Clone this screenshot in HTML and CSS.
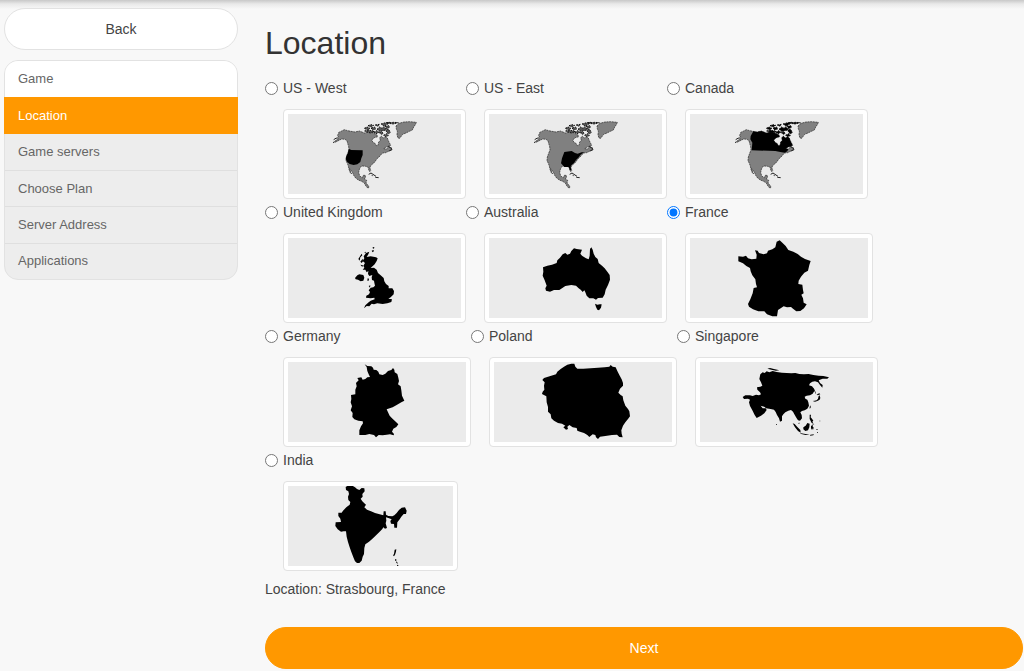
FILE: index.html
```
<!DOCTYPE html>
<html lang="en">
  <head>
    <meta charset="utf-8">
    <meta name="viewport" content="width=device-width, initial-scale=1">
    <title>Location</title>
    <link rel="stylesheet" href="styles.css">
  </head>
  <body>
    <!-- shared outline for the three North America maps -->
    <svg class="shapes" aria-hidden="true">
      <symbol id="north-america" overflow="visible">
        <path class="map__land" d="M24 98L33 91 40 87 34 85 40 80 37 76 41 71 40 68 50 63 58 59 68 62 78 64 90 66 103 63 118 69 130 66 142 68 155 74 158 80 148 83 140 90 144 97 151 101 154 107 159 106 161 96 166 91 164 84 169 78 175 84 182 80 187 84 190 92 193 98 197 106 191 109 182 112 176 116 184 117 190 112 199 113 200 119 190 124 182 128 173 129 168 134 162 141 155 147 150 155 143 162 136 168 135 175 137 182 134 185 131 179 129 171 122 169 112 168 105 172 103 179 101 187 104 198 112 203 115 196 121 196 121 203 118 207 125 211 123 219 129 226 132 231 129 235 122 227 118 219 110 214 100 210 92 204 86 196 83 188 77 180 74 176 76 184 80 192 76 188 72 178 70 168 67 160 63 152 64 141 68 130 72 120 71 110 68 100 66 92 60 88 50 87 40 92 32 96z"/>
        <path class="map__land" d="M213 48L222 40 237 36 254 35 274 37 271 44 266 51 262 60 253 64 245 68 233 73 224 85 219 84 216 75 217 64 214 56z"/>
        <path class="map__islands" d="M118 55l8-4 9 4-7 5zM129 47l9-3 8 2-7 5zM139 54l10-3 3 6-10 4zM151 45l12-2-4 6zM156 58l8-7 7 4 6-5 7 9 6-2 6 10-5 5-5-4-4-8-9 2-7 3zM168 42l14-4 12-1-7 6-9 5zM180 49l11-2 3 4-9 5zM186 39l20-2 14 1-16 4zM176 76l9-5 5 6-9 3zM119 63l12-3 16 5-11 4zM146 67l9-5 7 5-9 4zM163 68l7-2 5 4-6 3z"/>
        <path class="map__coast" d="M131 193l7-4 9 6 6 4M151 202l10 1M140 196l3 1M189 108l8 5 4 6-9 4M34 84l-8 5"/>
      </symbol>
    </svg>

    <div class="page">
      <nav class="sidebar">
        <button class="button button_back" type="button">Back</button>
        <ul class="steps">
          <li class="steps__item steps__item_done"><a class="steps__link" href="#game">Game</a></li>
          <li class="steps__item steps__item_active"><a class="steps__link" href="#location">Location</a></li>
          <li class="steps__item"><a class="steps__link" href="#servers">Game servers</a></li>
          <li class="steps__item"><a class="steps__link" href="#plan">Choose Plan</a></li>
          <li class="steps__item"><a class="steps__link" href="#address">Server Address</a></li>
          <li class="steps__item"><a class="steps__link" href="#applications">Applications</a></li>
        </ul>
      </nav>

      <main class="content">
        <h1 class="content__header">Location</h1>
        <div class="locations">
          <div class="location">
            <input class="location__radio" type="radio" name="location" id="us-west">
            <label class="location__label" for="us-west">US - West
              <svg class="map" viewBox="-111 12 519 240" aria-hidden="true">
                <use href="#north-america"/>
                <path d="M70 120L72 117 79 120 113 121 113 135 109 145 106 156 97 163 86 165 74 162 66 155 62 146 65 136 69 129z"/>
              </svg>
            </label>
          </div>
          <div class="location">
            <input class="location__radio" type="radio" name="location" id="us-east">
            <label class="location__label" for="us-east">US - East
              <svg class="map" viewBox="-111 12 519 240" aria-hidden="true">
                <use href="#north-america"/>
                <path d="M115 126L137 123 147 129 155 131 167 127 175 127 165 133 157 143 150 150 144 159 136 166 134 170 136 181 132 181 128 171 115 171 105 160 108 145z"/>
              </svg>
            </label>
          </div>
          <div class="location">
            <input class="location__radio" type="radio" name="location" id="canada">
            <label class="location__label" for="canada">Canada
              <svg class="map map_canada" viewBox="-111 12 519 240" aria-hidden="true">
                <use href="#north-america"/>
                <path d="M79 64L90 66 103 63 118 69 130 66 142 68 155 74 158 80 148 83 140 90 144 97 151 101 154 107 159 106 161 96 166 91 164 84 169 78 175 84 182 80 187 84 190 92 193 98 197 106 191 109 182 112 176 116 184 117 181 124 173 128 160 126 145 123 74 121 76 98 70 88 71 78z"/>
              </svg>
            </label>
          </div>
          <div class="location">
            <input class="location__radio" type="radio" name="location" id="uk">
            <label class="location__label" for="uk">United Kingdom
              <svg class="map" viewBox="-156 9 519 240" aria-hidden="true">
                <path d="M78 54L88 50 85 58 80 66 92 64 108 67 113 70 110 78 104 88 96 95 92 99 102 98 110 104 114 114 122 121 131 129 133 139 138 147 146 153 146 160 157 160 162 168 161 178 152 187 145 191 156 193 154 201 142 205 128 207 112 205 102 208 95 206 88 214 80 213 72 220 76 211 86 202 92 197 104 193 103 188 92 190 78 188 79 182 87 178 90 171 86 166 92 158 100 157 105 152 103 143 102 137 96 135 95 127 97 120 88 123 84 117 85 108 80 112 76 104 68 104 73 98 70 92 75 84 68 78 73 70 71 64z"/>
                <path d="M45 129L52 121 58 118 70 120 73 128 70 137 62 139 54 134 47 133zM55 72l6-10 4-6 2 5-6 6-2 10zM61 80l7-9 1 8-4 5zM61 89l8 2-2 5zM95 47l5-2 2 3-4 4zM98 37l5-1-1 5-4-1zM83 130l4 1-1 6-4 0zM86 153l5-2-1 7zM73 52l5-2-2 5z"/>
              </svg>
            </label>
          </div>
          <div class="location">
            <input class="location__radio" type="radio" name="location" id="australia">
            <label class="location__label" for="australia">Australia
              <svg class="map" viewBox="-123 9 519 240" aria-hidden="true">
                <path d="M39 97L52 92 66 89 80 84 82 76 90 68 98 58 106 54 112 59 120 56 124 48 132 40 140 42 156 44 151 56 156 62 168 70 176 73 179 62 180 42 184 37 188 44 191 56 196 66 203 72 206 84 216 92 224 100 232 110 239 120 240 134 234 150 227 164 224 178 218 188 204 189 198 194 190 190 178 190 170 182 166 172 163 166 158 171 152 164 146 160 138 152 124 150 106 153 96 160 88 165 72 165 60 170 48 167 46 160 50 152 44 136 38 122 40 110z"/>
                <path d="M195 206L202 209 210 208 215 208 213 218 207 226 202 224 198 216z"/>
              </svg>
            </label>
          </div>
          <div class="location">
            <input class="location__radio" type="radio" name="location" id="france" checked>
            <label class="location__label" for="france">France
              <svg class="map" viewBox="75 114 534 240" aria-hidden="true">
                <path d="M335 125L344 121 352 128 362 138 370 150 385 155 398 162 408 170 420 177 437 183 433 195 429 212 418 218 408 230 401 242 400 252 412 254 414 270 416 280 409 284 414 295 416 308 425 313 417 325 406 333 394 334 384 326 378 321 366 322 356 319 347 325 339 330 336 349 322 349 306 343 298 334 280 334 264 328 252 320 249 312 256 298 263 280 266 264 276 262 273 252 271 238 262 226 257 214 255 204 244 198 234 190 220 184 220 169 234 170 243 167 249 175 260 178 274 176 275 164 270 151 278 152 282 159 296 163 306 160 309 152 322 148 331 142z"/>
              </svg>
            </label>
          </div>
          <div class="location">
            <input class="location__radio" type="radio" name="location" id="germany">
            <label class="location__label" for="germany">Germany
              <svg class="map" viewBox="-126 21 534 240" aria-hidden="true">
                <path d="M104 28L112 33 124 34 129 38 131 44 139 45 145 50 148 58 158 60 166 56 174 48 184 45 189 39 193 44 194 52 202 57 205 68 207 78 204 88 212 94 214 106 216 122 223 137 214 142 200 150 188 157 170 163 174 172 179 182 186 190 198 201 205 208 199 216 190 221 186 230 192 237 191 241 180 238 170 239 158 241 146 240 138 247 132 240 118 237 106 240 88 240 88 226 93 214 99 205 98 199 85 197 73 193 67 186 68 174 62 166 66 154 62 142 64 132 63 120 76 118 76 104 80 94 78 84 86 76 82 69 94 67 98 74 106 72 112 67 120 66 116 58 112 48 110 36z"/>
              </svg>
            </label>
          </div>
          <div class="location">
            <input class="location__radio" type="radio" name="location" id="poland">
            <label class="location__label" for="poland">Poland
              <svg class="map" viewBox="-108 21 534 240" aria-hidden="true">
                <path d="M37 75L42 69 54 65 78 58 82 50 92 42 102 35 112 29 124 26 133 26 136 35 142 41 160 41 182 40 204 38 224 37 238 35 242 30 248 35 257 37 262 48 268 60 275 73 279 84 279 92 270 101 265 113 272 120 278 124 280 136 286 152 294 162 298 169 300 184 294 192 286 202 279 212 274 226 275 236 278 247 268 246 261 239 246 240 226 243 210 245 204 252 198 247 196 240 188 238 178 246 172 240 162 234 150 230 142 227 140 219 128 217 118 210 112 215 114 222 108 224 100 217 106 212 96 206 84 204 72 197 64 190 62 178 54 170 54 156 50 142 49 124 36 117 38 110 43 104 42 92 44 82z"/>
              </svg>
            </label>
          </div>
          <div class="location">
            <input class="location__radio" type="radio" name="location" id="singapore">
            <label class="location__label" for="singapore">Singapore
              <svg class="map" viewBox="-90 21 519 240" aria-hidden="true">
                <path d="M91 58L98 52 104 54 110 49 118 52 128 48 140 51 156 53 170 54 184 55 196 54 208 57 222 58 236 57 250 60 266 62 280 63 297 67 292 71 278 71 266 76 270 84 278 90 277 98 270 90 264 82 255 79 247 80 240 85 237 91 246 94 252 101 253 108 248 116 240 121 230 122 224 125 226 131 232 134 235 142 237 152 232 161 224 166 216 168 211 172 215 180 216 190 210 197 204 196 199 188 193 178 189 170 183 165 175 167 166 172 160 178 156 184 156 197 150 200 147 190 141 180 137 171 132 164 122 162 108 160 104 156 92 152 98 160 107 160 110 165 103 175 93 182 80 189 74 180 67 166 60 153 57 142 60 134 54 131 42 132 38 126 46 121 60 121 68 123 78 119 87 121 93 118 90 112 82 104 81 97 91 95 97 92 93 82 88 72z"/>
                <path d="M112 41l8-2 15 4 13 3-10 1-14-3zM188 205l6 2 8 9 9 9 1 8-8-5-9-11zM220 217l7-5 5-8 7 2-1 11-4 9-8 2-6-5zM243 214l4-5 6-2-6 5 4 6-2 7-3-5-3 5zM209 234l13 2 9 2 8 1-12 1-13-3zM241 239l11-1-2 3-10 1zM239 155l3-4 0 7-3 3zM239 179l4 0-1 8 4 4 4 6-3 3 4 6-6-2-3-6-3-6zM248 138l6-1 6-1 4-5 2-8 3-2 2 8-2 5-7 4-7 2zM261 118l7-3 3 3-8 3zM251 99l3 7 3 6 2 8-4-8-5-9zM205 204l4-1-2 5z"/>
                <path d="M138 208h3v2h-3zM268 197h3v2h-3zM259 222h4v2h-4zM261 232h3v2h-3z"/>
              </svg>
            </label>
          </div>
          <div class="location">
            <input class="location__radio" type="radio" name="location" id="india">
            <label class="location__label" for="india">India
              <svg class="map" viewBox="-111 24 495 240" aria-hidden="true">
                <path d="M62 27L70 22 82 23 90 28 96 33 103 36 110 30 118 31 119 40 112 48 113 56 107 62 112 70 118 76 123 80 118 88 126 95 138 100 150 105 164 109 175 112 176 100 182 100 183 110 190 114 202 115 208 112 215 105 222 96 230 89 240 88 245 98 243 108 236 108 229 116 223 125 217 133 216 149 208 149 207 138 198 137 196 129 200 124 190 120 183 118 184 128 182 136 186 150 180 152 175 148 172 153 164 161 154 171 144 181 132 191 121 199 118 210 117 228 113 236 110 248 103 255 96 255 90 250 85 238 79 222 74 208 69 192 65 176 63 160 56 160 48 161 38 154 31 144 32 133 48 132 46 122 40 114 40 104 50 104 54 98 64 88 74 80 76 72 70 66 69 56 72 48 70 40 63 36z"/>
                <path d="M209 215l5-1-1 7-3 9-3 5-3-3 3-4zM210 244l4 0 0 4-4 0zM213 250l4 3 1 5-4-4zM216 260l4 2 0 3-4-2z"/>
              </svg>
            </label>
          </div>
        </div>
        <p class="content__selected">Location: Strasbourg, France</p>
        <button class="button button_next" type="button">Next</button>
      </main>
    </div>
    <script>
      var places = {
        'us-west': 'US - West',
        'us-east': 'US - East',
        'canada': 'Canada',
        'uk': 'United Kingdom',
        'australia': 'Australia',
        'france': 'Strasbourg, France',
        'germany': 'Germany',
        'poland': 'Poland',
        'singapore': 'Singapore',
        'india': 'India'
      };

      document.querySelector('.locations').addEventListener('change', function(event) {
        document.querySelector('.content__selected').textContent = 'Location: ' + places[event.target.id];
      });
    </script>
  </body>
</html>
```
FILE: styles.css
```
html {
  font-family: "Liberation Sans", Arial, Helvetica, sans-serif;
  font-size: 14px;
  line-height: 24px;
  color: #444;
  background: #f8f8f8;
}

body {
  margin: 0;
  background: linear-gradient(#c8c8c8, #e9e9e9 4px, #f8f8f8 9px) no-repeat;
}

.shapes {
  position: absolute;
  width: 0;
  height: 0;
}

.page {
  display: grid;
  grid-template-columns: 234px minmax(0, 1fr);
  gap: 27px;
  padding: 8px 1px 2px 4px;
}

.button {
  display: block;
  width: 100%;
  padding: 8px;
  border: 1px solid #e2e2e2;
  border-radius: 21px;
  font: inherit;
  color: #444;
  background: #fff;
  cursor: pointer;
}

.button_next {
  border-color: #ff9800;
  color: #fff;
  background: #ff9800;
}

.steps {
  display: grid;
  grid-auto-rows: 1fr;
  min-height: 220px;
  box-sizing: border-box;
  margin: 10px 0 0;
  padding: 0;
  border: 1px solid #e2e2e2;
  border-radius: 14px;
  list-style: none;
  font-size: 13px;
  line-height: 20px;
  background: #ededed;
}

.steps__item {
  display: flex;
  align-items: center;
  border-top: 1px solid #dfdfdf;
}

.steps__item_done {
  border-top: none;
  border-radius: 13px 13px 0 0;
  background: #fff;
}

.steps__item_active {
  margin: 0 -1px;
  padding: 0 1px;
  border-color: #ff9800;
  background: #ff9800;
}

.steps__item_active + .steps__item {
  border-color: #ededed;
}

.steps__link {
  flex: 1;
  padding: 0 13px;
  color: #666;
  text-decoration: none;
}

.steps__item_active .steps__link {
  color: #fff;
}

.content__header {
  margin: 15px 0 13px;
  font-size: 32px;
  font-weight: normal;
  line-height: 40px;
  color: #333;
}

.locations {
  display: flex;
  flex-wrap: wrap;
}

.location {
  display: flex;
  align-items: flex-start;
  margin-bottom: 1px;
}

.location__radio {
  width: 13px;
  height: 13px;
  margin: 6px 5px 0 0;
}

.location__label {
  display: block;
}

.map {
  display: block;
  height: 80px;
  margin-top: 9px;
  padding: 4px;
  border: 1px solid #e2e2e2;
  border-radius: 4px;
  color: #555;
  fill: #000;
  background: #ebebeb content-box;
  box-shadow: inset 0 0 0 4px #fff;
}

.map_canada {
  color: #000;
}

.map__land {
  fill: #808080;
  stroke: #222;
  stroke-width: 2;
  stroke-dasharray: 6 2;
}

.map__islands {
  fill: currentColor;
  stroke: #111;
  stroke-width: 3;
  stroke-dasharray: 5 3;
}

.map__coast {
  fill: none;
  stroke: #222;
  stroke-width: 3;
}

.content__selected {
  margin: 5px 0 26px;
}
```
